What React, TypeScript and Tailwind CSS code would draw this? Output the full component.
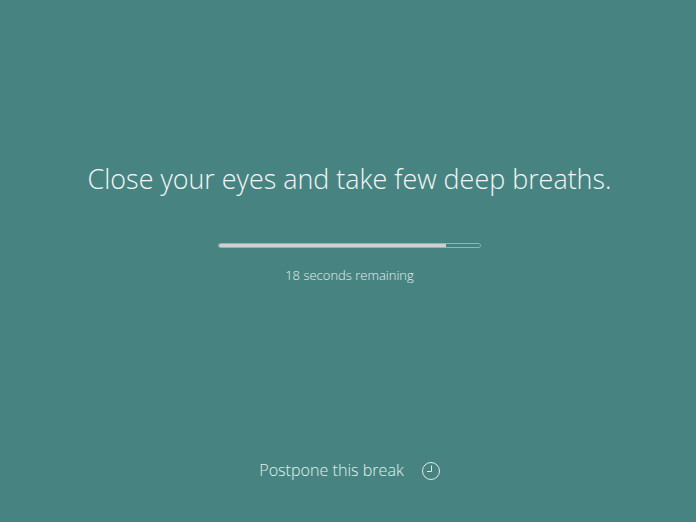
export default function App() {
  return (
    <div className="flex h-[522px] w-[696px] flex-col items-center bg-[#478481] pl-[3px] font-['Open_Sans',sans-serif] text-white">
      <h1 className="mt-[160px] text-[26.9px] leading-[38px] font-light text-[#f2f6f6]">
        Close your eyes and take few deep breaths.
      </h1>
      <div className="mt-[45px] h-[5px] w-[263px] overflow-hidden rounded-full border border-[#93b5b3]">
        <div className="h-full w-[87%] bg-[#d0d0d0]" />
      </div>
      <p className="mt-[18px] text-[13px] leading-[18px] font-light text-[#e6eeee]">18 seconds remaining</p>
      <div className="mt-[175px] flex items-center gap-[17px] pl-[1px]">
        <span className="mb-[2px] text-[16.1px] leading-[22px] font-light text-[#e6eeee]">Postpone this break</span>
        <svg width="20" height="20" viewBox="0 0 20 20" fill="none" stroke="#dfe9e8" strokeWidth="1">
          <circle cx="10" cy="10" r="8.5" />
          <path d="M10.5 4.5V10.5H6" />
        </svg>
      </div>
    </div>
  );
}
